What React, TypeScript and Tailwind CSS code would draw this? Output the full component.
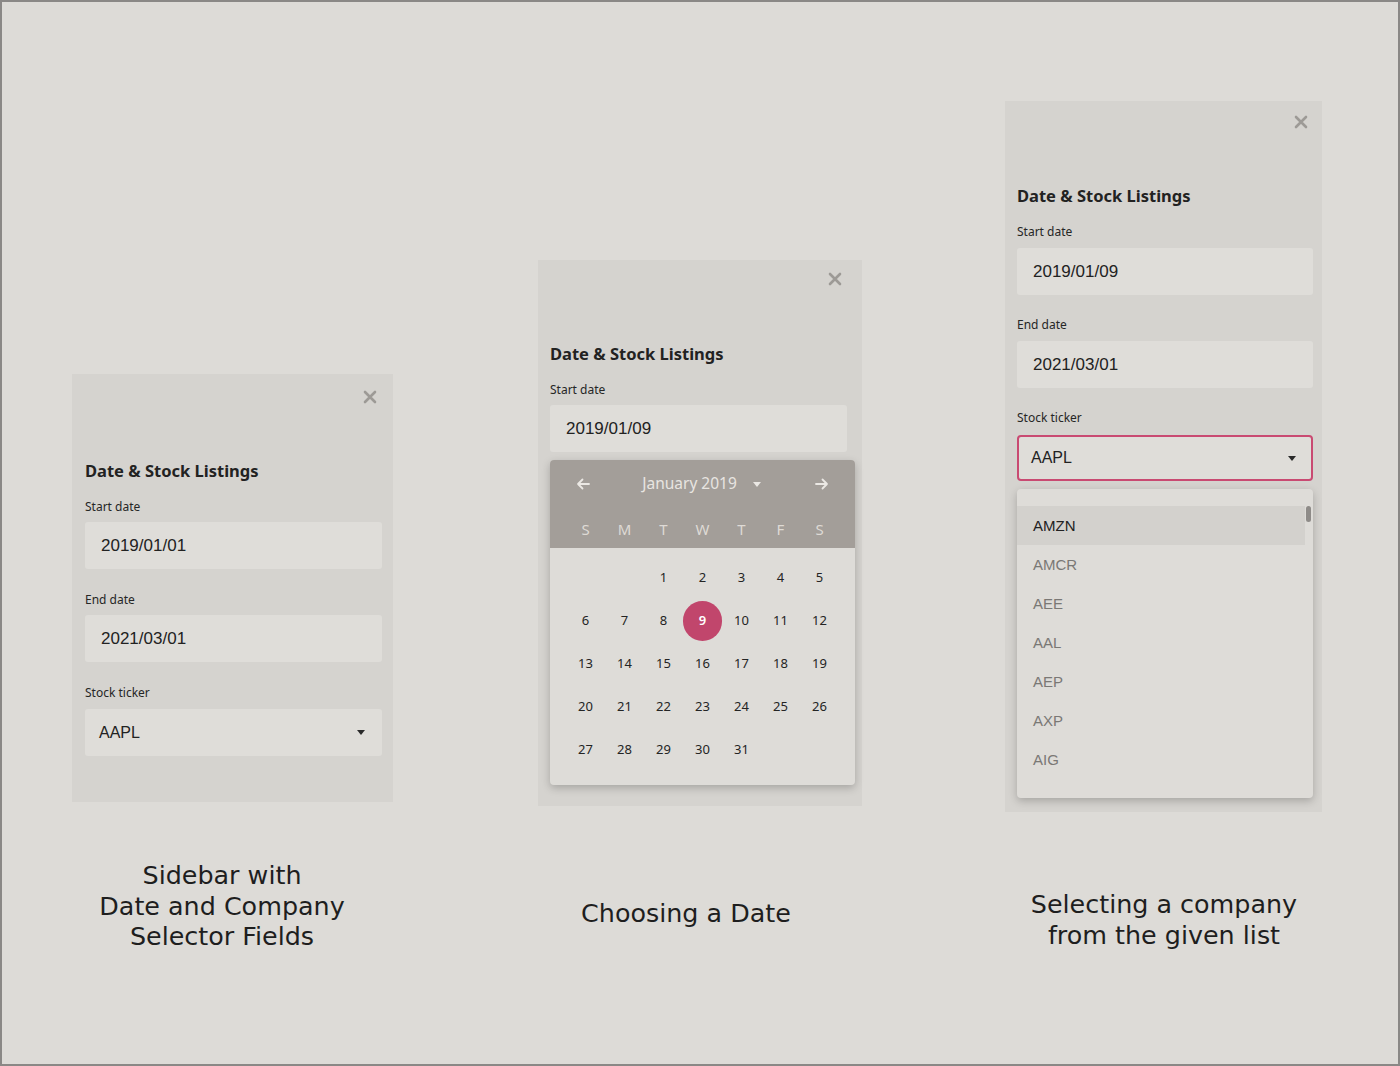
import React from "react";

const CloseX = () => (
  <svg width="14" height="14" viewBox="0 0 14 14" className="block">
    <path d="M2 2L12 12M12 2L2 12" stroke="#9d9a96" strokeWidth="2.6" strokeLinecap="round" />
  </svg>
);

const Caret = () => (
  <svg width="8" height="5" viewBox="0 0 8 5" className="block">
    <path d="M0 0H8L4 5Z" fill="#2a2a2a" />
  </svg>
);

const labelCls = "h-[18px] leading-[18px] pt-[1px] text-[12px] text-[#262626] font-['Noto_Sans',sans-serif]";
const inputCls =
  "h-[47px] rounded-[3px] bg-[#dfddd9] flex items-center pl-[16px] text-[17px] text-[#222] font-['Liberation_Sans',Arial,sans-serif]";
const headingCls = "h-[24px] leading-[24px] text-[16.5px] font-bold text-[#222] font-['Noto_Sans',sans-serif]";

function Field({ label, value, mt, gap }: { label: string; value: string; mt: string; gap: string }) {
  return (
    <div className={mt}>
      <div className={labelCls}>{label}</div>
      <div className={`${inputCls} ${gap}`}>{value}</div>
    </div>
  );
}

function LeftPanel() {
  return (
    <div className="w-[321px] h-[428px] bg-[#d5d3cf] pt-[16px] pl-[13px] pr-[11px]">
      <div className="flex justify-end pr-[5px]">
        <CloseX />
      </div>
      <div className={`${headingCls} mt-[55px]`}>Date &amp; Stock Listings</div>
      <Field label="Start date" value="2019/01/01" mt="mt-[14px]" gap="mt-[7px]" />
      <Field label="End date" value="2021/03/01" mt="mt-[21px]" gap="mt-[7px]" />
      <div className="mt-[21px]">
        <div className={labelCls}>Stock ticker</div>
        <div className="mt-[8px] h-[47px] rounded-[3px] bg-[#dfddd9] flex items-center justify-between pl-[14px] pr-[17px] text-[16px] text-[#222] font-['Liberation_Sans',Arial,sans-serif]">
          <span>AAPL</span>
          <Caret />
        </div>
      </div>
    </div>
  );
}

const days: (number | null)[] = [
  null, null, 1, 2, 3, 4, 5,
  6, 7, 8, 9, 10, 11, 12,
  13, 14, 15, 16, 17, 18, 19,
  20, 21, 22, 23, 24, 25, 26,
  27, 28, 29, 30, 31, null, null,
];

function Calendar() {
  return (
    <div className="w-[305px] h-[325px] rounded-[4px] bg-[#dedcd8] shadow-[0_3px_8px_rgba(0,0,0,0.22)] overflow-hidden">
      <div className="h-[88px] bg-[#a39e99]">
        <div className="h-[48px] flex items-center justify-between pl-[26px] pr-[26px] text-[#e6e3df]">
          <svg width="14" height="12" viewBox="0 0 14 12" className="block">
            <path d="M13 6H2M6.5 1.5L2 6l4.5 4.5" stroke="#ebe8e4" strokeWidth="1.8" fill="none" strokeLinecap="round" strokeLinejoin="round" />
          </svg>
          <div className="flex items-center gap-[16px] mr-[2px]">
            <span className="text-[15.5px] font-['Noto_Sans',sans-serif] text-[#e8e5e1]">January 2019</span>
            <svg width="8" height="5" viewBox="0 0 8 5" className="block">
              <path d="M0 0H8L4 5Z" fill="#ebe8e4" />
            </svg>
          </div>
          <svg width="14" height="12" viewBox="0 0 14 12" className="block">
            <path d="M1 6H12M7.5 1.5L12 6l-4.5 4.5" stroke="#ebe8e4" strokeWidth="1.8" fill="none" strokeLinecap="round" strokeLinejoin="round" />
          </svg>
        </div>
        <div className="h-[40px] pt-[2px] grid grid-cols-7 px-[16px] items-center">
          {["S", "M", "T", "W", "T", "F", "S"].map((d, i) => (
            <div key={i} className="text-center text-[15px] font-['Noto_Sans',sans-serif] text-[#dedad5]">
              {d}
            </div>
          ))}
        </div>
      </div>
      <div className="grid grid-cols-7 px-[16px] pt-[8px] auto-rows-[43px]">
        {days.map((d, i) => (
          <div key={i} className="flex items-center justify-center">
            {d === 9 ? (
              <div className="w-[40px] h-[40px] rounded-full bg-[#c1466c] flex items-center justify-center text-[13px] font-semibold text-white font-['Noto_Sans',sans-serif]">
                9
              </div>
            ) : d !== null ? (
              <span className="text-[13px] text-[#242424] font-['Noto_Sans',sans-serif]">{d}</span>
            ) : null}
          </div>
        ))}
      </div>
    </div>
  );
}

function MiddlePanel() {
  return (
    <div className="w-[324px] bg-[#d5d3cf] pt-[12px] pl-[12px] pr-[7px] pb-[21px]">
      <div className="flex justify-end pr-[13px]">
        <CloseX />
      </div>
      <div className={`${headingCls} mt-[56px]`}>Date &amp; Stock Listings</div>
      <div className="mt-[14px]">
        <div className={labelCls}>Start date</div>
        <div className={`${inputCls} mt-[7px] w-[297px]`}>2019/01/09</div>
      </div>
      <div className="mt-[8px]">
        <Calendar />
      </div>
    </div>
  );
}

const tickers = ["AMZN", "AMCR", "AEE", "AAL", "AEP", "AXP", "AIG"];

function RightPanel() {
  return (
    <div className="w-[317px] bg-[#d5d3cf] pt-[14px] pl-[12px] pr-[9px] pb-[14px]">
      <div className="flex justify-end pr-[5px]">
        <CloseX />
      </div>
      <div className={`${headingCls} mt-[55px]`}>Date &amp; Stock Listings</div>
      <Field label="Start date" value="2019/01/09" mt="mt-[14px]" gap="mt-[8px]" />
      <Field label="End date" value="2021/03/01" mt="mt-[20px]" gap="mt-[8px]" />
      <div className="mt-[20px]">
        <div className={labelCls}>Stock ticker</div>
        <div className="mt-[9px] h-[46px] rounded-[4px] border-2 border-[#c94a72] bg-[#dfddd9] flex items-center justify-between pl-[12px] pr-[15px] text-[16px] text-[#222] font-['Liberation_Sans',Arial,sans-serif]">
          <span>AAPL</span>
          <Caret />
        </div>
      </div>
      <div className="mt-[8px] h-[309px] rounded-[4px] bg-[#dedcd8] shadow-[0_3px_8px_rgba(0,0,0,0.22)] pt-[17px] flex">
        <div className="flex-1">
          {tickers.map((t, i) => (
            <div
              key={t}
              className={`h-[39px] flex items-center pl-[16px] pt-[2px] text-[15px] font-['Liberation_Sans',Arial,sans-serif] ${
                i === 0 ? "bg-[#d3d1cd] text-[#222]" : "text-[#7a7875]"
              }`}
            >
              {t}
            </div>
          ))}
        </div>
        <div className="w-[6px] mr-[1px] ml-[1px]">
          <div className="h-[16px] w-[5px] rounded-full bg-[#8e8b88]" />
        </div>
      </div>
    </div>
  );
}

const captionCls = "text-center text-[25.4px] leading-[30.5px] text-[#1e1e1e] font-['DejaVu_Sans',sans-serif]";

export default function App() {
  return (
    <div className="w-[1400px] h-[1066px] border-2 border-[#8a8886] bg-[#dddbd7] overflow-hidden">
      <div className="flex items-start">
        <div className="ml-[70px] mt-[372px] w-[321px]">
          <LeftPanel />
          <div className={`${captionCls} mt-[58px] w-[400px] ml-[-50px]`}>
            Sidebar with
            <br />
            Date and Company
            <br />
            Selector Fields
          </div>
        </div>
        <div className="ml-[145px] mt-[258px] w-[324px]">
          <MiddlePanel />
          <div className={`${captionCls} mt-[92px] w-[400px] ml-[-52px]`}>Choosing a Date</div>
        </div>
        <div className="ml-[143px] mt-[99px] w-[317px]">
          <RightPanel />
          <div className={`${captionCls} mt-[77px] w-[400px] ml-[-41px]`}>
            Selecting a company
            <br />
            from the given list
          </div>
        </div>
      </div>
    </div>
  );
}
